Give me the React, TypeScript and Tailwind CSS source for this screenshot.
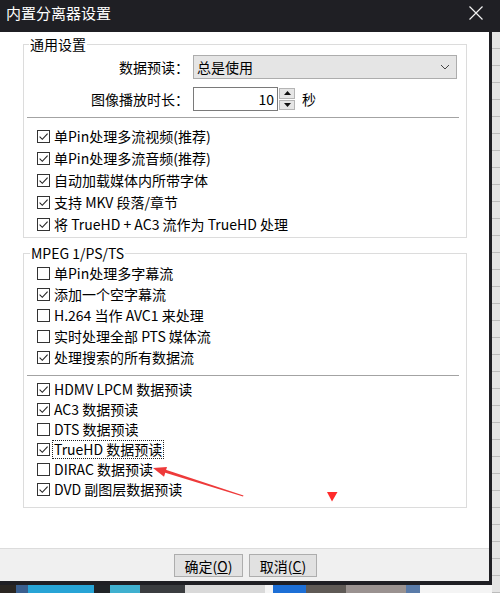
import React from "react";

const Box = ({ checked }: { checked: boolean }) => (
  <svg width="13" height="13" viewBox="0 0 13 13" className="shrink-0">
    <rect x="0.5" y="0.5" width="12" height="12" fill="#ffffff" stroke="#333333" />
    {checked && (
      <path d="M2.6 6.6 L5.3 9.3 L10.6 3.6" fill="none" stroke="#222222" strokeWidth="1.1" />
    )}
  </svg>
);

type RowProps = { checked: boolean; label: string; h: string; focus?: boolean };

const Row = ({ checked, label, h, focus }: RowProps) => (
  <div className={`flex items-center gap-[2px] pl-[13px] ${h}`}>
    <Box checked={checked} />
    <span
      className={
        focus
          ? "leading-[17px] px-[1px] border border-dotted border-[#222]"
          : "leading-[17px] px-[2px]"
      }
    >
      {label}
    </span>
  </div>
);

const Sep = () => <div className="ml-[3px] w-[432px] h-[1px] bg-[#a3a3a3]" />;

export default function App() {
  const g1 = [
    "单Pin处理多流视频(推荐)",
    "单Pin处理多流音频(推荐)",
    "自动加载媒体内所带字体",
    "支持 MKV 段落/章节",
    "将 TrueHD + AC3 流作为 TrueHD 处理",
  ];
  const g2: [boolean, string][] = [
    [false, "单Pin处理多字幕流"],
    [true, "添加一个空字幕流"],
    [false, "H.264 当作 AVC1 来处理"],
    [false, "实时处理全部 PTS 媒体流"],
    [true, "处理搜索的所有数据流"],
  ];
  const g3: [boolean, string][] = [
    [true, "HDMV LPCM 数据预读"],
    [true, "AC3 数据预读"],
    [false, "DTS 数据预读"],
    [true, "TrueHD 数据预读"],
    [false, "DIRAC 数据预读"],
    [true, "DVD 副图层数据预读"],
  ];

  return (
    <div className="relative w-[500px] h-[593px] overflow-hidden flex flex-col bg-[#1f1f24] text-[14px] text-black font-['Noto_Sans_CJK_SC',sans-serif]">
      {/* title bar */}
      <div className="h-[32px] shrink-0 flex items-start justify-between pl-[6px] pr-[16px] pt-[3px] bg-[#1f1f24]">
        <span className="text-white text-[15px] leading-[20px]">内置分离器设置</span>
        <svg width="16" height="16" viewBox="0 0 16 16" className="mt-[2px]">
          <path d="M1.5 1.5 L14.5 14.5 M14.5 1.5 L1.5 14.5" stroke="#f2f2f2" strokeWidth="1.2" />
        </svg>
      </div>

      <div className="flex flex-1">
        {/* dialog column */}
        <div className="w-[492px] flex flex-col">
          <div className="flex">
            <div className="w-[489px] flex flex-col">
              {/* body */}
              <div className="h-[516px] bg-white pt-[2px] pl-[23px]">
                <fieldset className="w-[444px] border border-[#dcdcdc] pb-[2px]">
                  <legend className="ml-[5px] px-[1px] leading-[20px]">通用设置</legend>
                  <div className="mt-[1px] flex items-center h-[24px]">
                    <span className="w-[165px] text-right leading-[20px]">数据预读：</span>
                    <div className="ml-[4px] w-[264px] h-[24px] flex items-center justify-between bg-[#e5e5e5] border border-[#adadad] pl-[3px] pr-[6px]">
                      <span className="leading-[20px]">总是使用</span>
                      <svg width="10" height="6" viewBox="0 0 10 6">
                        <path d="M1 1 L5 5 L9 1" fill="none" stroke="#444" strokeWidth="1" />
                      </svg>
                    </div>
                  </div>
                  <div className="mt-[8px] flex items-center h-[24px]">
                    <span className="w-[165px] text-right leading-[20px]">图像播放时长：</span>
                    <div className="ml-[4px] w-[85px] h-[24px] border border-[#7a7a7a] flex items-center justify-end pr-[3px] bg-white">
                      <span className="leading-[20px]">10</span>
                    </div>
                    <div className="w-[18px] h-[24px] flex flex-col gap-[1px] p-[1px] bg-white">
                      <div className="flex-1 flex items-center justify-center bg-[#e6e6e6] border border-[#b5b5b5]">
                        <svg width="7" height="4" viewBox="0 0 7 4"><path d="M0 4 L3.5 0 L7 4 Z" fill="#111" /></svg>
                      </div>
                      <div className="flex-1 flex items-center justify-center bg-[#e6e6e6] border border-[#b5b5b5]">
                        <svg width="7" height="4" viewBox="0 0 7 4"><path d="M0 0 L3.5 4 L7 0 Z" fill="#111" /></svg>
                      </div>
                    </div>
                    <span className="ml-[6px] leading-[20px]">秒</span>
                  </div>
                  <div className="mt-[6px]">
                    <Sep />
                  </div>
                  <div className="mt-[7px] flex flex-col">
                    {g1.map((t) => (
                      <Row key={t} checked label={t} h="h-[22px]" />
                    ))}
                  </div>
                </fieldset>

                <fieldset className="mt-[5px] w-[444px] border border-[#dcdcdc] pb-[8px]">
                  <legend className="ml-[6px] px-[1px] leading-[20px]">MPEG 1/PS/TS</legend>
                  <div className="flex flex-col">
                    {g2.map(([c, t]) => (
                      <Row key={t} checked={c} label={t} h="h-[21px]" />
                    ))}
                  </div>
                  <div className="mt-[7px]">
                    <Sep />
                  </div>
                  <div className="mt-[3px] flex flex-col">
                    {g3.map(([c, t]) => (
                      <Row key={t} checked={c} label={t} h="h-[20px]" focus={t.startsWith("TrueHD")} />
                    ))}
                  </div>
                </fieldset>
              </div>
              {/* footer */}
              <div className="h-[33px] bg-[#f0f0f0] border-t border-[#dcdcdc] flex items-start justify-center gap-[6px] pt-[5px] pl-[2px]">
                <button className="w-[69px] h-[23px] bg-[#e1e1e1] border border-[#adadad] leading-[20px] text-[14px]">
                  确定(<span className="underline">O</span>)
                </button>
                <button className="w-[68px] h-[23px] bg-[#e1e1e1] border border-[#adadad] leading-[20px] text-[14px]">
                  取消(<span className="underline">C</span>)
                </button>
              </div>
            </div>
            <div className="w-[3px] bg-[#1f1f24]" />
          </div>
          <div className="h-[4px] bg-[#1f1f24]" />
          {/* desktop strip */}
          <div className="flex-1 flex">
            <div className="w-[16px] bg-[#2a2622]" />
            <div className="w-[12px] bg-[#3a5f8f]" />
            <div className="w-[66px] bg-[#27a4d6]" />
            <div className="w-[16px] bg-[#202428]" />
            <div className="w-[30px] bg-[#3fb0cf]" />
            <div className="w-[45px] bg-[#3b3d40]" />
            <div className="w-[80px] bg-[#d9d9d9]" />
            <div className="w-[8px] bg-[#f5f5f5]" />
            <div className="w-[33px] bg-[#1d6fd6]" />
            <div className="w-[40px] bg-[#5f5a56]" />
            <div className="w-[60px] bg-[#9a9290]" />
            <div className="w-[14px] bg-[#5a7ba8]" />
            <div className="flex-1 bg-[#f4f4f4]" />
          </div>
        </div>
        {/* right background strip */}
        <div className="flex-1 flex flex-col bg-[#e4e4e4]">
          {Array.from({ length: 34 }).map((_, i) => (
            <div key={i} className="h-[17px] border-b border-[#bcbcbc]" />
          ))}
        </div>
      </div>

      {/* annotation overlay */}
      <svg className="absolute left-0 top-0 pointer-events-none" width="500" height="593" viewBox="0 0 500 593">
        <polygon points="165,469.5 243.5,495.6 243,496.6 164.5,472.5" fill="#ee3a3a" />
        <polygon points="153,468 167,467 164,476.8" fill="#ee3a3a" />
        <polygon points="327,492 337.5,492 332,501.5" fill="#ff2b2b" />
      </svg>
    </div>
  );
}
